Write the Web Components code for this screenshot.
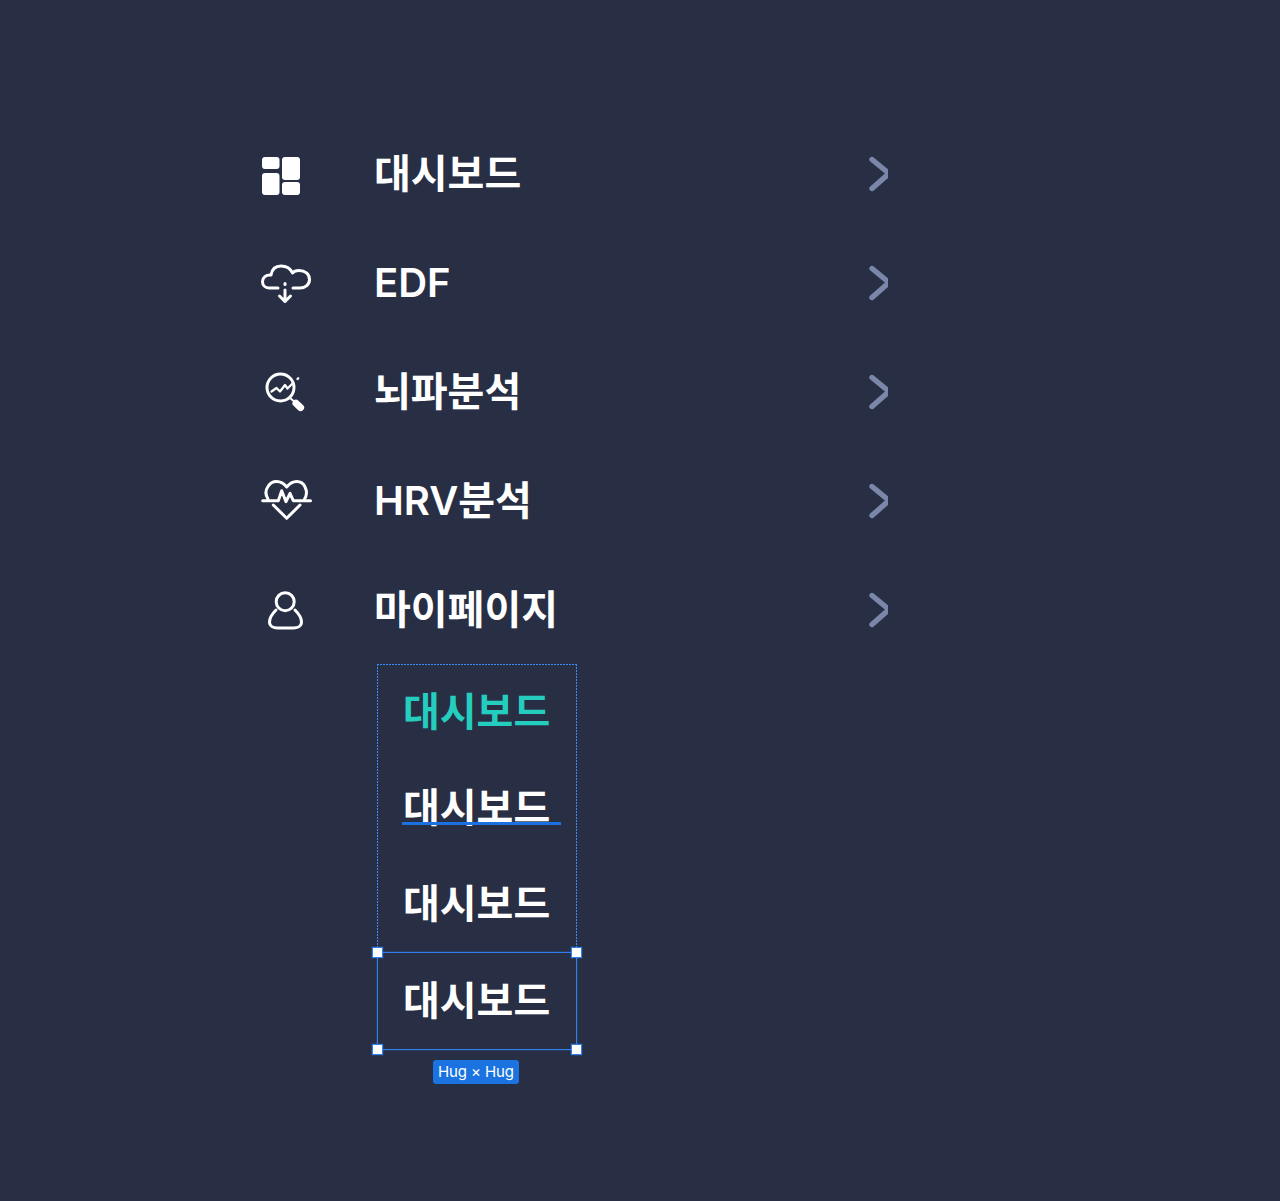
<!DOCTYPE html>
<html lang="ko">
<head>
<meta charset="utf-8">
<title>Menu</title>
<style>
  html, body { margin: 0; background: #282f44; }
  body { font-family: Inter, "Noto Sans CJK KR", sans-serif; color: #fff; }
</style>
</head>
<body>
<template id="nav-row-tpl">
  <style>
    :host { display: flex; height: 109px; width: 628px; box-sizing: border-box; }
    .icon { width: 52px; height: 44px; margin-top: 32px; margin-right: 62px; flex: none; }
    .label { flex: 1; font-size: 40px; font-weight: 600; line-height: 58px; margin-top: 25px; }
    svg.chev { width: 24px; height: 36px; margin-top: 36px; flex: none; }
    ::slotted(svg) { display: block; width: 52px; height: 44px; overflow: visible; }
  </style>
  <div class="icon"><slot name="icon"></slot></div>
  <div class="label"><slot></slot></div>
  <svg class="chev" viewBox="0 0 24 36"><path d="M10 4 L27 18 L10 33" transform="translate(-2 -0.5)" fill="none" stroke="#7b87a8" stroke-width="5.4" stroke-linecap="round" stroke-linejoin="round"/></svg>
</template>

<template id="sub-item-tpl">
  <style>
    :host { display: flex; align-items: center; height: 96.33px; box-sizing: border-box; padding-left: 25px; padding-bottom: 3px; position: relative; font-size: 40px; font-weight: 600; color: #fff; }
    :host([variant="active"]) { color: #25cdbf; }
    :host([variant="hover"])::after { content: ""; position: absolute; left: 24px; top: 61px; width: 159px; height: 3px; background: #1d70e0; }
    span { line-height: 58px; }
  </style>
  <span><slot></slot></span>
</template>

<template id="sub-list-tpl">
  <style>
    :host {
      display: block; width: 200px; box-sizing: border-box; padding: 1px 1px 0; margin-left: 117px; margin-top: -1px;
      background:
        repeating-linear-gradient(90deg, #3a8bf5 0 2px, transparent 2px 3px) top left / 100% 1px no-repeat,
        repeating-linear-gradient(0deg, #3a8bf5 0 2px, transparent 2px 3px) top left / 1px 100% no-repeat,
        repeating-linear-gradient(0deg, #3a8bf5 0 2px, transparent 2px 3px) top right / 1px 100% no-repeat;
    }
  </style>
  <slot></slot>
</template>

<template id="select-frame-tpl">
  <style>
    :host { display: block; position: relative; height: 98px; box-sizing: border-box; margin: -2px -1px 0; border: 1px solid #2f80ed; padding-top: 1px; box-shadow: 0 0 1px #2f80ed; }
    .handle { position: absolute; width: 9px; height: 9px; background: #fff; border: 1px solid #2f80ed; box-shadow: 0 0 1px #2f80ed; }
    .tl { left: -6px; top: -6px; } .tr { right: -6px; top: -6px; }
    .bl { left: -6px; bottom: -6px; } .br { right: -6px; bottom: -6px; }
    .tag { position: absolute; left: 55px; top: 107px; width: 86px; height: 24px; border-radius: 3px; background: #1a73e0; color: #fff; font: 400 15px/24px Inter, sans-serif; letter-spacing: -0.1px; text-align: center; white-space: nowrap; }
  </style>
  <slot></slot>
  <i class="handle tl"></i><i class="handle tr"></i><i class="handle bl"></i><i class="handle br"></i>
  <div class="tag">Hug × Hug</div>
</template>

<template id="side-menu-tpl">
  <style>
    :host { display: block; padding: 120px 0 0 260px; height: 1201px; box-sizing: border-box; overflow: hidden; }
  </style>
  <slot></slot>
</template>

<side-menu>
  <nav-row>
    <svg slot="icon" viewBox="0 0 52 44" fill="#fff"><rect x="2" y="5" width="17.5" height="12" rx="3"/><rect x="2" y="21" width="17.5" height="22" rx="3"/><rect x="22" y="5" width="18" height="23" rx="3"/><rect x="22" y="30" width="18" height="13" rx="3"/></svg>
    대시보드
  </nav-row>
  <nav-row>
    <svg slot="icon" viewBox="0 0 52 44" fill="none" stroke="#fff" stroke-width="3" stroke-linecap="round" stroke-linejoin="round"><path d="M18 27 H9 C5 27 2.5 24 2.5 20.5 C2.5 16.5 6 13.5 11 14 C12 8 16 5 21 5 C26 5 30.5 7.5 32.5 12 C34 10 36 9.5 39 9.5 C45 9.5 49.5 13 49.5 18.5 C49.5 23.5 45.5 27 40 27 H33"/><path d="M25 22.5 V23.5"/><path d="M25 29 V40.5 M19.5 35 L25 40.5 L30.5 35"/></svg>
    EDF
  </nav-row>
  <nav-row>
    <svg slot="icon" viewBox="0 0 52 44" fill="none" stroke="#fff" stroke-linecap="round" stroke-linejoin="round"><circle cx="20.5" cy="17.5" r="13.5" stroke-width="3"/><path d="M11.5 21.5 L16.5 18 L20 21.5 L25 15 L27.5 18.5 L33 13" stroke-width="2.2"/><path d="M37.5 9 L38.2 8.3" stroke-width="2.4"/><path d="M30 28 L36 33" stroke-width="2"/><path d="M36 33.3 L40.6 37.6" stroke-width="7"/></svg>
    뇌파분석
  </nav-row>
  <nav-row>
    <svg slot="icon" viewBox="0 0 52 44" fill="none" stroke="#fff" stroke-width="3" stroke-linecap="round" stroke-linejoin="round"><path d="M8 20 C5.5 16 5.5 11 8 7.5 C10 4 13 2.5 16.5 2.5 C20.5 2.5 24 4.5 26.7 8 C29.5 4.5 33 2.5 36.7 2.5 C40.5 2.5 43.5 4.5 45 8 C47 12 46.5 17 44.5 20"/><path d="M2.7 21.7 H18.3 L21.7 11.7 L26 22.7 L30 14.3 L33.3 21.7 H50.5"/><path d="M13.3 26 L26.7 39.3 L40 26"/></svg>
    HRV분석
  </nav-row>
  <nav-row>
    <svg slot="icon" viewBox="0 0 52 44" fill="none" stroke="#fff" stroke-width="3" stroke-linecap="round" stroke-linejoin="round"><circle cx="25.2" cy="13.7" r="9"/><path d="M16 22 C12 26 9.5 30 9.5 34 C9.5 38 13.5 40 17.5 40 H33.5 C37.5 40 41.5 38 41.5 34 C41.5 30 39 26 35 22"/></svg>
    마이페이지
  </nav-row>
  <sub-list>
    <sub-item variant="active">대시보드</sub-item>
    <sub-item variant="hover">대시보드</sub-item>
    <sub-item>대시보드</sub-item>
    <select-frame><sub-item>대시보드</sub-item></select-frame>
  </sub-list>
</side-menu>

<script>
// each element clones its own template into an open shadow root
function define(name, tplId) {
  customElements.define(name, class extends HTMLElement {
    constructor() {
      super();
      this.attachShadow({ mode: 'open' });
      this.shadowRoot.appendChild(document.getElementById(tplId).content.cloneNode(true));
    }
  });
}
define('side-menu', 'side-menu-tpl');
define('nav-row', 'nav-row-tpl');
define('sub-list', 'sub-list-tpl');
define('sub-item', 'sub-item-tpl');
define('select-frame', 'select-frame-tpl');
</script>
</body>
</html>
